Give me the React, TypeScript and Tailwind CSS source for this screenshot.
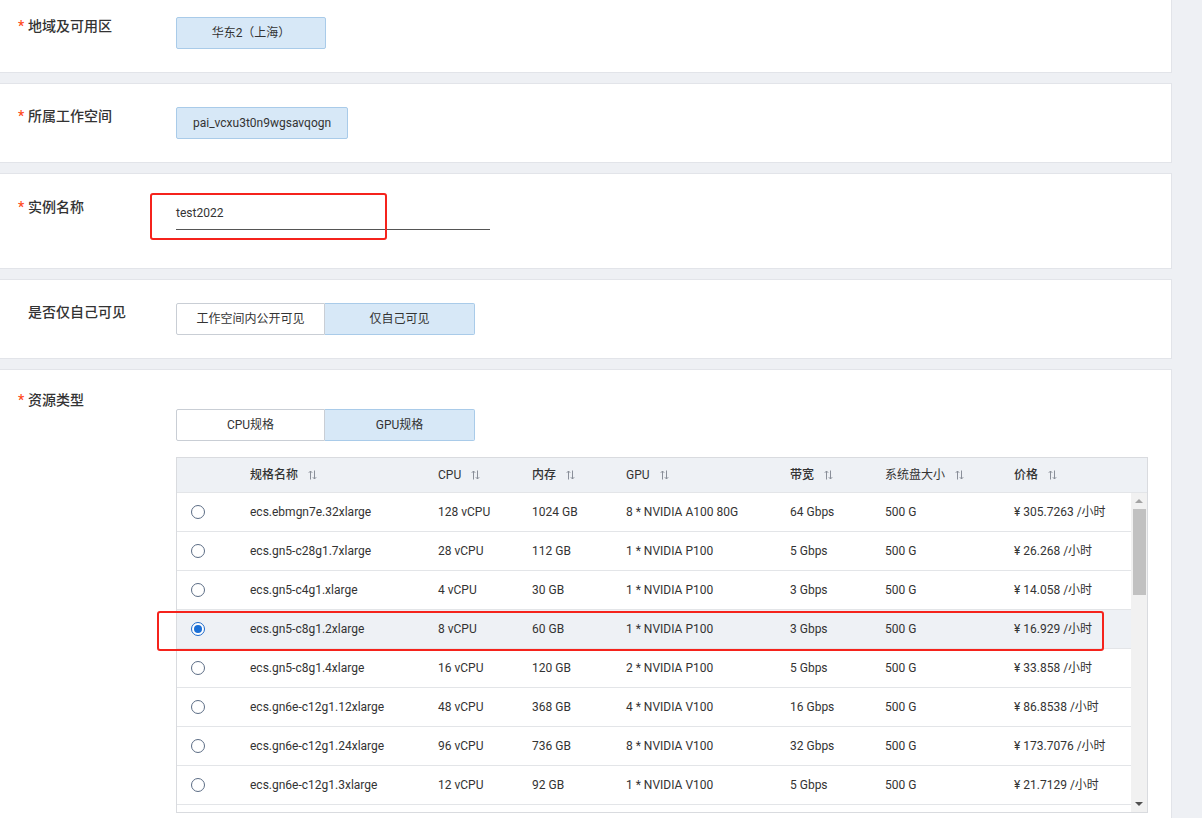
import React from "react";

const FONT = 'Roboto, "Noto Sans CJK SC", sans-serif';

const rows = [
  { name: "ecs.ebmgn7e.32xlarge", cpu: "128 vCPU", mem: "1024 GB", gpu: "8 * NVIDIA A100 80G", bw: "64 Gbps", disk: "500 G", price: "¥ 305.7263 /小时" },
  { name: "ecs.gn5-c28g1.7xlarge", cpu: "28 vCPU", mem: "112 GB", gpu: "1 * NVIDIA P100", bw: "5 Gbps", disk: "500 G", price: "¥ 26.268 /小时" },
  { name: "ecs.gn5-c4g1.xlarge", cpu: "4 vCPU", mem: "30 GB", gpu: "1 * NVIDIA P100", bw: "3 Gbps", disk: "500 G", price: "¥ 14.058 /小时" },
  { name: "ecs.gn5-c8g1.2xlarge", cpu: "8 vCPU", mem: "60 GB", gpu: "1 * NVIDIA P100", bw: "3 Gbps", disk: "500 G", price: "¥ 16.929 /小时", selected: true },
  { name: "ecs.gn5-c8g1.4xlarge", cpu: "16 vCPU", mem: "120 GB", gpu: "2 * NVIDIA P100", bw: "5 Gbps", disk: "500 G", price: "¥ 33.858 /小时" },
  { name: "ecs.gn6e-c12g1.12xlarge", cpu: "48 vCPU", mem: "368 GB", gpu: "4 * NVIDIA V100", bw: "16 Gbps", disk: "500 G", price: "¥ 86.8538 /小时" },
  { name: "ecs.gn6e-c12g1.24xlarge", cpu: "96 vCPU", mem: "736 GB", gpu: "8 * NVIDIA V100", bw: "32 Gbps", disk: "500 G", price: "¥ 173.7076 /小时" },
  { name: "ecs.gn6e-c12g1.3xlarge", cpu: "12 vCPU", mem: "92 GB", gpu: "1 * NVIDIA V100", bw: "5 Gbps", disk: "500 G", price: "¥ 21.7129 /小时" },
];

const cols = "grid grid-cols-[73px_188px_94px_94px_164px_95px_129px_1fr]";

function SortIcon() {
  return (
    <svg width="9" height="10" viewBox="0 0 9 10" className="ml-[10px] inline-block" fill="none" stroke="#8a8f99" strokeWidth="1">
      <path d="M2.5 9.5V1M0.8 2.8L2.5 1L4.2 2.8" />
      <path d="M6.5 0.5V9M4.8 7.2L6.5 9L8.2 7.2" />
    </svg>
  );
}

function Radio({ on }: { on?: boolean }) {
  return on ? (
    <span className="flex h-[14px] w-[14px] items-center justify-center rounded-full border border-[#1b68c9] bg-white">
      <span className="h-[8px] w-[8px] rounded-full bg-[#1b6fd6]" />
    </span>
  ) : (
    <span className="block h-[14px] w-[14px] rounded-full border border-[#5c6d85] bg-white" />
  );
}

function Label({ text, required = true }: { text: string; required?: boolean }) {
  return (
    <div className="flex w-[176px] shrink-0 items-center pl-[18px] text-[14px] font-medium leading-[16px] text-[#333]">
      <span className="w-[10px] text-[#ff4a1a]">{required ? "*" : ""}</span>
      <span>{text}</span>
    </div>
  );
}

function Toggle({ left, right }: { left: string; right: string }) {
  return (
    <div className="flex h-[32px] w-[299px] text-[12px] text-[#333]">
      <div className="flex w-[149px] items-center justify-center rounded-l-[2px] border border-[#c9ced5] bg-white">{left}</div>
      <div className="flex w-[150px] items-center justify-center rounded-r-[2px] border border-l-0 border-[#a9cbe9] bg-[#d7e8f7]">{right}</div>
    </div>
  );
}

export default function App() {
  return (
    <div className="min-h-screen w-full overflow-hidden bg-[#eef0f4] pr-[30px]" style={{ fontFamily: FONT }}>
      <div className="flex flex-col gap-[10px]">
        {/* region */}
        <div className="flex h-[73px] border-r border-b border-[#e2e4e9] bg-white pt-[17px]">
          <div className="pt-[1px]"><Label text="地域及可用区" /></div>
          <div className="flex h-[32px] w-[150px] items-center justify-center rounded-[2px] border border-[#a9cbe9] bg-[#d7e8f7] text-[12px] text-[#333]">
            华东2（上海）
          </div>
        </div>

        {/* workspace */}
        <div className="flex h-[80px] border border-l-0 border-[#e2e4e9] bg-white pt-[23px]">
          <div className="pt-[1px]"><Label text="所属工作空间" /></div>
          <div className="flex h-[32px] items-center justify-center rounded-[2px] border border-[#a9cbe9] bg-[#d7e8f7] px-[16px] text-[12px] text-[#333]">
            pai_vcxu3t0n9wgsavqogn
          </div>
        </div>

        {/* name */}
        <div className="flex h-[96px] border border-l-0 border-[#e2e4e9] bg-white pt-[23px]">
          <div className="pt-[2px]"><Label text="实例名称" /></div>
          <div className="relative">
            <div className="flex h-[33px] w-[314px] items-center border-b border-[#555] text-[12px] text-[#333]">test2022</div>
            <div className="pointer-events-none absolute left-[-26px] top-[-4px] h-[47px] w-[237px] rounded-[3px] border-2 border-[#f5231c]" />
          </div>
        </div>

        {/* visibility */}
        <div className="flex h-[80px] border border-l-0 border-[#e2e4e9] bg-white pt-[23px]">
          <div className="pt-[1px]"><Label text="是否仅自己可见" required={false} /></div>
          <Toggle left="工作空间内公开可见" right="仅自己可见" />
        </div>

        {/* resource type */}
        <div className="flex h-[460px] border border-l-0 border-[#e2e4e9] bg-white pt-[22px]">
          <div><Label text="资源类型" /></div>
          <div className="flex flex-col gap-[16px] pt-[17px]">
            <Toggle left="CPU规格" right="GPU规格" />
            <div className="relative w-[972px] border border-[#d9dbdf] text-[12px] text-[#333]">
              <div className={`${cols} h-[35px] items-center border-b border-[#e3e5e8] bg-[#eef1f5]`}>
                <div />
                <div className="flex items-center font-medium">规格名称<SortIcon /></div>
                <div className="flex items-center">CPU<SortIcon /></div>
                <div className="flex items-center font-medium">内存<SortIcon /></div>
                <div className="flex items-center">GPU<SortIcon /></div>
                <div className="flex items-center font-medium">带宽<SortIcon /></div>
                <div className="flex items-center">系统盘大小<SortIcon /></div>
                <div className="flex items-center font-medium">价格<SortIcon /></div>
              </div>
              <div className="flex h-[319px]">
                <div className="h-full w-[954px] overflow-hidden">
                  {rows.map((r) => (
                    <div
                      key={r.name}
                      className={`${cols} h-[39px] shrink-0 items-center border-b border-[#e3e5e8] ${r.selected ? "bg-[#eef1f5]" : "bg-white"}`}
                    >
                      <div className="pl-[14px]"><Radio on={r.selected} /></div>
                      <div>{r.name}</div>
                      <div>{r.cpu}</div>
                      <div>{r.mem}</div>
                      <div>{r.gpu}</div>
                      <div>{r.bw}</div>
                      <div>{r.disk}</div>
                      <div>{r.price}</div>
                    </div>
                  ))}
                  <div className="h-[39px] bg-white" />
                </div>
                <div className="flex w-[16px] flex-col items-center bg-[#f1f1f1]">
                  <div className="flex h-[16px] items-center justify-center">
                    <span className="h-0 w-0 border-x-[4px] border-b-[4px] border-x-transparent border-b-[#a3a3a3]" />
                  </div>
                  <div className="h-[86px] w-[13px] bg-[#c1c1c1]" />
                  <div className="flex-1" />
                  <div className="flex h-[16px] items-center justify-center">
                    <span className="h-0 w-0 border-x-[4px] border-t-[4px] border-x-transparent border-t-[#505050]" />
                  </div>
                </div>
              </div>
              <div className="pointer-events-none absolute left-[-20px] top-[153px] h-[40px] w-[947px] rounded-[3px] border-2 border-[#f5231c]" />
            </div>
          </div>
        </div>
      </div>
    </div>
  );
}
